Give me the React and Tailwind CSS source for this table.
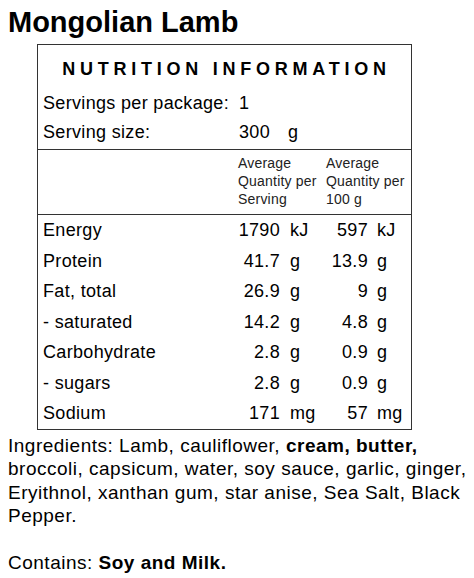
const rows = [
  { label: "Energy", v1: "1790", u1: "kJ", v2: "597", u2: "kJ" },
  { label: "Protein", v1: "41.7", u1: "g", v2: "13.9", u2: "g" },
  { label: "Fat, total", v1: "26.9", u1: "g", v2: "9", u2: "g" },
  { label: "- saturated", v1: "14.2", u1: "g", v2: "4.8", u2: "g" },
  { label: "Carbohydrate", v1: "2.8", u1: "g", v2: "0.9", u2: "g" },
  { label: "- sugars", v1: "2.8", u1: "g", v2: "0.9", u2: "g" },
  { label: "Sodium", v1: "171", u1: "mg", v2: "57", u2: "mg" },
]

export default function App() {
  return (
    <div className="w-[474px] h-[578px] bg-white text-black font-['Liberation_Sans',Arial,sans-serif] overflow-hidden">
      <h1 className="pl-[8px] pt-[8px] text-[29px] leading-[29px] font-bold">Mongolian Lamb</h1>

      <div className="ml-[37px] mt-[7px] w-[375px] border border-[#333]">
        <div className="text-center text-[18px] leading-[24px] font-bold tracking-[4.75px] pt-[12px] pl-[4px]">
          NUTRITION INFORMATION
        </div>
        <div className="mt-[8px] pb-[2px] text-[18px] leading-[29px] tracking-[0.33px]">
          <div className="grid grid-cols-[200px_1fr]">
            <span className="pl-[5px]">Servings per package:</span>
            <span className="pl-[1px]">1</span>
          </div>
          <div className="grid grid-cols-[200px_50px_1fr]">
            <span className="pl-[5px]">Serving size:</span>
            <span className="pl-[1px]">300</span>
            <span>g</span>
          </div>
        </div>

        <div className="border-t border-[#333] grid grid-cols-[200px_88px_1fr] text-[14px] leading-[18px] tracking-[0.2px] text-[#222] pt-[4px] pb-[6px]">
          <span />
          <span>Average<br />Quantity per<br />Serving</span>
          <span>Average<br />Quantity per<br />100 g</span>
        </div>

        <div className="border-t border-[#333] text-[18px] leading-[30.5px] tracking-[0.33px]">
          {rows.map((r) => (
            <div key={r.label} className="grid grid-cols-[200px_42px_46px_42px_1fr]">
              <span className="pl-[5px]">{r.label}</span>
              <span className="text-right">{r.v1}</span>
              <span className="pl-[10px]">{r.u1}</span>
              <span className="text-right">{r.v2}</span>
              <span className="pl-[9px]">{r.u2}</span>
            </div>
          ))}
        </div>
      </div>

      <div className="pl-[8px] mt-[4px] text-[19px] leading-[23.6px] tracking-[0.5px] whitespace-nowrap">
        <p>
          Ingredients: Lamb, cauliflower, <b>cream, butter,</b>
          <br />
          broccoli, capsicum, water, soy sauce, garlic, ginger,
          <br />
          Eryithnol, xanthan gum, star anise, Sea Salt, Black
          <br />
          Pepper.
        </p>
        <p className="mt-[23.6px]">
          Contains: <b>Soy and Milk.</b>
        </p>
      </div>
    </div>
  )
}
